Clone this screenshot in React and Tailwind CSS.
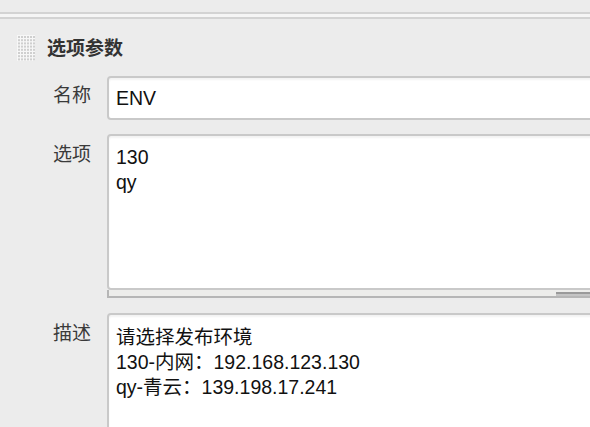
import React from "react";

const font = "font-['Liberation_Sans','Noto_Sans_CJK_SC',sans-serif]";

function DragHandle() {
  const dots = [];
  for (let r = 0; r < 8; r++) {
    for (let c = 0; c < 6; c++) {
      dots.push(<rect key={`${r}-${c}`} x={1 + c * 3} y={1 + r * 3.2} width="2" height="2" fill="#cfcfcf" />);
    }
  }
  return (
    <svg width="18" height="26" viewBox="0 0 18 26" className="shrink-0">
      <rect width="18" height="26" fill="#f7f7f7" />
      {dots}
    </svg>
  );
}

function Field({ label, children, labelPad = "pt-[8px]" }) {
  return (
    <div className="flex items-start">
      <div className={`w-[91px] shrink-0 text-right text-[19px] leading-[25px] text-[#3a3a3a] ${labelPad}`}>
        {label}
      </div>
      <div className="ml-[16px] w-[520px] shrink-0">{children}</div>
    </div>
  );
}

export default function App() {
  const box =
    "block w-full rounded-[4px] border-2 border-[#c9c9c9] bg-white text-[19.5px] text-[#111] shadow-[inset_0_2px_2px_rgba(0,0,0,0.05)] outline-none";

  return (
    <div className={`w-[590px] h-[427px] overflow-hidden bg-[#ececec] ${font}`}>
      <div className="pt-[12px]">
        <div className="h-[7px] border-y-2 border-[#d3d3d3] bg-[#f5f5f5]" />
      </div>

      <div className="flex items-center gap-[12px] pl-[17px] mt-[16px]">
        <DragHandle />
        <span className="text-[19px] font-bold text-[#333] leading-[25px]">选项参数</span>
      </div>

      <div className="mt-[15px] flex flex-col">
        <Field label="名称" labelPad="pt-[7px]">
          <input
            readOnly
            defaultValue="ENV"
            className={`${box} h-[44px] px-[7px]`}
          />
        </Field>

        <div className="mt-[14px]">
          <Field label="选项" labelPad="pt-[8px]">
            <textarea
              readOnly
              defaultValue={"130\nqy"}
              className={`${box} h-[156px] resize-none px-[7px] pt-[9px] leading-[25px]`}
            />
            <div className="flex h-[8px] items-start border-l-2 border-b-2 border-[#b6b6b6] bg-[#ededeb]">
              <div className="ml-[447px] mt-[2px] h-[4px] w-[80px] border-t-2 border-[#9a9a9a] bg-[#c4c4c4]" />
            </div>
          </Field>
        </div>

        <div className="mt-[15px]">
          <Field label="描述" labelPad="pt-[8px]">
            <textarea
              readOnly
              defaultValue={"请选择发布环境\n130-内网：192.168.123.130\nqy-青云：139.198.17.241"}
              className={`${box} h-[160px] resize-none px-[7px] pt-[10px] leading-[25px]`}
            />
          </Field>
        </div>
      </div>
    </div>
  );
}
